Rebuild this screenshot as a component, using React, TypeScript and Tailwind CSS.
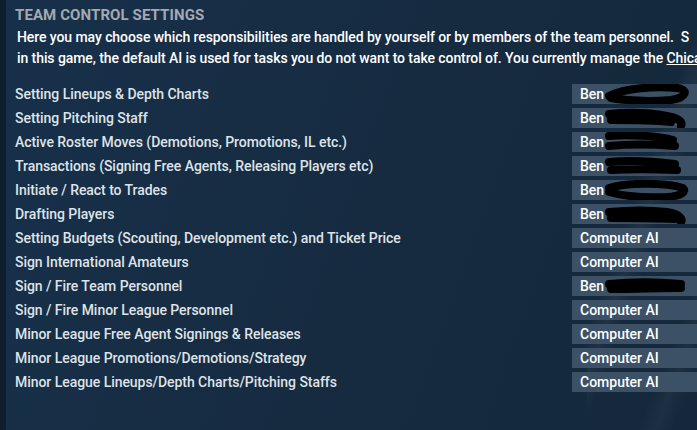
import React from 'react';

type Row = { label: string; owner: 'ben' | 'ai'; scribble?: number };

const rows: Row[] = [
  { label: 'Setting Lineups & Depth Charts', owner: 'ben', scribble: 0 },
  { label: 'Setting Pitching Staff', owner: 'ben', scribble: 1 },
  { label: 'Active Roster Moves (Demotions, Promotions, IL etc.)', owner: 'ben', scribble: 2 },
  { label: 'Transactions (Signing Free Agents, Releasing Players etc)', owner: 'ben', scribble: 3 },
  { label: 'Initiate / React to Trades', owner: 'ben', scribble: 4 },
  { label: 'Drafting Players', owner: 'ben', scribble: 5 },
  { label: 'Setting Budgets (Scouting, Development etc.) and Ticket Price', owner: 'ai' },
  { label: 'Sign International Amateurs', owner: 'ai' },
  { label: 'Sign / Fire Team Personnel', owner: 'ben', scribble: 6 },
  { label: 'Sign / Fire Minor League Personnel', owner: 'ai' },
  { label: 'Minor League Free Agent Signings & Releases', owner: 'ai' },
  { label: 'Minor League Promotions/Demotions/Strategy', owner: 'ai' },
  { label: 'Minor League Lineups/Depth Charts/Pitching Staffs', owner: 'ai' },
];

// hand-drawn marker strokes covering the surnames
const scribbles = [
  'M4 12 C 20 4, 50 2, 72 4 C 84 5, 82 14, 66 16 C 44 18, 24 17, 6 14',
  'M4 6 C 24 4, 46 5, 62 8 C 74 10, 78 14, 76 18 M6 12 C 24 12, 46 12, 66 14',
  'M4 4 C 24 2, 54 4, 68 8 M4 14 C 24 12, 46 12, 70 14',
  'M4 6 C 24 4, 46 5, 70 8 M6 14 C 24 13, 46 13, 72 14',
  'M4 8 C 24 2, 62 3, 78 8 C 82 12, 76 16, 62 17 C 40 18, 18 16, 4 12',
  'M4 8 C 24 6, 46 6, 62 8 C 76 10, 78 16, 76 18 M6 14 C 24 14, 46 14, 70 15',
  'M4 8 C 24 6, 54 6, 76 8 M6 13 C 30 13, 54 12, 76 12',
];

function Scribble({ idx }: { idx: number }) {
  return (
    <svg className="absolute left-[33px] top-0" width="90" height="20" viewBox="0 0 90 20">
      <path d={scribbles[idx]} fill="none" stroke="#000" strokeWidth="8" strokeLinecap="round" strokeLinejoin="round" />
    </svg>
  );
}

export default function App() {
  return (
    <div
      className="flex h-[430px] w-[697px] overflow-hidden bg-[#162a3e] text-[#dde2e7]"
      style={{ fontFamily: 'Roboto, "Noto Sans", sans-serif' }}
    >
      <div className="w-[6px] shrink-0 bg-[#0f1e2d]" />
      <div className="relative flex min-w-0 flex-1 flex-col overflow-hidden pl-[9px] bg-[linear-gradient(110deg,#17304a_0%,#162b40_55%,#15283b_100%)]">
        <div className="pointer-events-none absolute right-[-30px] top-0 h-full w-[140px] bg-[linear-gradient(110deg,transparent_40%,rgba(255,255,255,0.045)_46%,transparent_52%,transparent_70%,rgba(255,255,255,0.035)_76%,transparent_82%)]" />
        <h1 className="relative mt-[5px] text-[15px] font-bold leading-[20px] tracking-[0.1px] text-[#a2a9b1]">TEAM CONTROL SETTINGS</h1>
        <div className="relative mt-[2px] pl-[2px] text-[14px] font-medium leading-[21px] tracking-[-0.08px] text-white whitespace-nowrap">
          <p>Here you may choose which responsibilities are handled by yourself or by members of the team personnel.&nbsp; S</p>
          <p>
            in this game, the default AI is used for tasks you do not want to take control of. You currently manage the{' '}
            <span className="underline">Chica</span>
          </p>
        </div>
        <ul className="relative mt-[15px] flex flex-col gap-[4px]">
          {rows.map((r) => (
            <li key={r.label} className="flex h-[20px] items-center">
              <span className="flex-1 text-[14px] font-medium leading-[20px] tracking-[-0.05px] text-[#dfe3e7] whitespace-nowrap">{r.label}</span>
              <div className="relative flex h-[20px] w-[125px] shrink-0 items-center bg-[#3d5166] pl-[8px] text-[14px] font-medium text-white">
                {r.owner === 'ben' ? (
                  <>
                    <span>Ben</span>
                    {r.scribble !== undefined && <Scribble idx={r.scribble} />}
                  </>
                ) : (
                  <span>Computer AI</span>
                )}
              </div>
            </li>
          ))}
        </ul>
      </div>
    </div>
  );
}
